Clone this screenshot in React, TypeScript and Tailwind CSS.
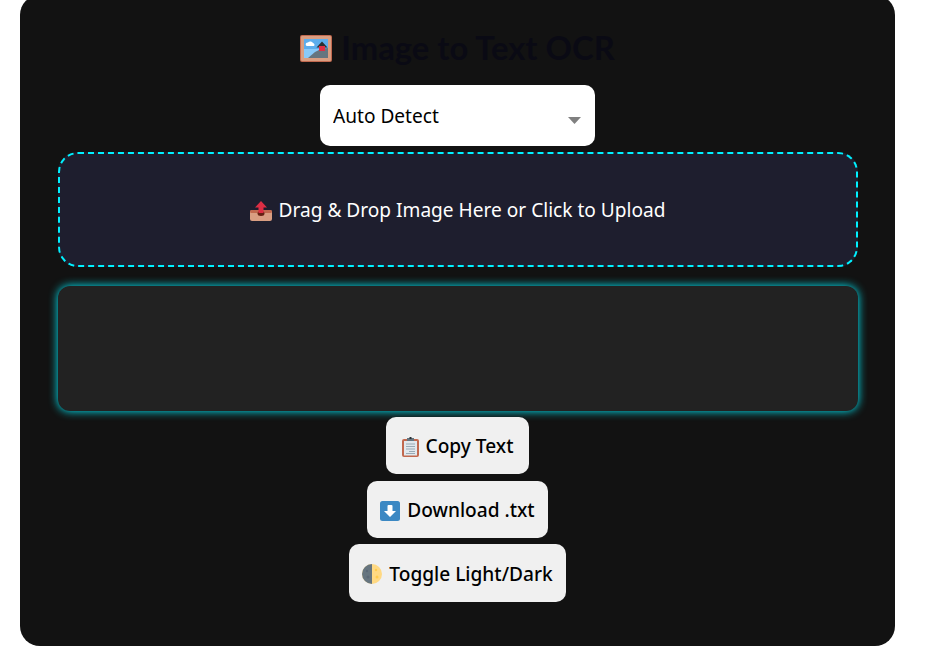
const body = { fontFamily: '"Noto Sans", "Open Sans", sans-serif' }
const title = { fontFamily: 'Lato, "Noto Sans", sans-serif' }

function PictureIcon() {
  return (
    <svg width="32" height="27" viewBox="0 0 32 27" className="shrink-0">
      <rect x="0" y="0" width="32" height="27" rx="2" fill="#c1694f" />
      <rect x="1" y="1" width="30" height="25" rx="1" fill="#d99e82" />
      <rect x="4" y="4" width="24" height="19" fill="#5dadec" />
      <rect x="4" y="14" width="24" height="9" fill="#88c9f9" />
      <path d="M6 10.500a2 2 0 0 1 2-3 3 3 0 0 1 5 .5 1.800 1.800 0 0 1 1 3H7a1.500 1.500 0 0 1-1-.5z" fill="#fff" />
      <path d="M8 23l7-6 6-3 7-1v10z" fill="#66757f" />
      <path d="M16.500 12.500l5.500-6 5.500 6z" fill="#292f33" />
      <rect x="19" y="11" width="6" height="5" fill="#dd2e44" />
    </svg>
  )
}

function UploadIcon() {
  return (
    <svg width="22" height="20" viewBox="0 0 22 20" className="shrink-0">
      <rect x="0" y="9" width="22" height="11" rx="2" fill="#d99e82" />
      <rect x="0" y="9" width="22" height="3" rx="1.500" fill="#c1694f" />
      <ellipse cx="11" cy="12.500" rx="3.500" ry="2.500" fill="#662113" />
      <path d="M11 0l6 6.500h-3.500V12h-5V6.500H5z" fill="#dd2e44" />
    </svg>
  )
}

function ClipboardIcon() {
  return (
    <svg width="17" height="20" viewBox="0 0 17 20" className="shrink-0">
      <rect x="0" y="2" width="17" height="18" rx="2" fill="#c1694f" />
      <rect x="2" y="4" width="13" height="14.500" fill="#e1e8ed" />
      <rect x="5" y="1" width="7" height="3" fill="#66757f" />
      <rect x="7.500" y="0" width="2" height="2" fill="#292f33" />
      <path d="M4 7h9M4 9.500h9M4 12h9M7 14.500h6M4 16.500h9" stroke="#99aab5" strokeWidth="1" />
    </svg>
  )
}

function DownloadIcon() {
  return (
    <svg width="20" height="20" viewBox="0 0 20 20" className="shrink-0">
      <rect width="20" height="20" rx="2.500" fill="#3b88c3" />
      <path d="M10 16L4 10h3.500V5a1 1 0 0 1 1-1h3a1 1 0 0 1 1 1v5H16z" fill="#fff" />
    </svg>
  )
}

function MoonIcon() {
  return (
    <svg width="20" height="20" viewBox="0 0 20 20" className="shrink-0">
      <circle cx="10" cy="10" r="10" fill="#ffd983" />
      <path d="M10 0a10 10 0 0 0 0 20z" fill="#66757f" />
      <circle cx="5" cy="7" r="1.200" fill="#5b6876" />
      <circle cx="6" cy="13" r="1.500" fill="#5b6876" />
      <circle cx="14" cy="6" r="1.200" fill="#ffcc4d" />
      <circle cx="15" cy="13" r="1.500" fill="#ffcc4d" />
    </svg>
  )
}

function ActionButton({ icon, label, className }: { icon: React.ReactNode; label: string; className: string }) {
  return (
    <button
      type="button"
      className={'flex items-center justify-center gap-[7px] rounded-[10px] bg-[#f0f0f0] pt-[2px] text-[19.100px] font-medium text-[#000] ' + className}
    >
      {icon}
      {label}
    </button>
  )
}

export default function App() {
  return (
    <div className="min-h-[661px] bg-white pl-[20px]" style={body}>
      <div className="mt-[-5px] flex h-[651px] w-[875px] flex-col items-center rounded-[20px] bg-[#121212] pt-[34px]">
        <h1 className="flex h-[38px] items-center gap-[9px] text-[32.800px] font-bold text-[#0a0a14]" style={title}>
          <PictureIcon />
          Image to Text OCR
        </h1>

        <div className="relative mt-[18px] h-[61px] w-[275px]">
          <select
            className="h-full w-full appearance-none rounded-[10px] bg-white px-[13px] pt-[2px] text-[19.100px] text-black"
            style={body}
          >
            <option>Auto Detect</option>
          </select>
          <svg width="13" height="7" viewBox="0 0 13 7" className="absolute right-[14px] top-[32px]">
            <path d="M0 0h13L6.500 7z" fill="#808080" />
          </svg>
        </div>

        <div className="mt-[6px] flex h-[115px] w-[800px] items-center justify-center gap-[7px] rounded-[20px] border-2 border-dashed border-[#00f0ff] bg-[#1e1e2e] pt-[2px] text-[19.100px] text-white">
          <UploadIcon />
          Drag &amp; Drop Image Here or Click to Upload
        </div>

        <textarea className="mt-[19px] h-[125px] w-[800px] resize-none rounded-[12px] bg-[#222222] shadow-[0_0_10px_#00f0ff]" />

        <ActionButton icon={<ClipboardIcon />} label="Copy Text" className="mt-[6px] h-[57px] w-[143px]" />
        <ActionButton icon={<DownloadIcon />} label="Download .txt" className="mt-[7px] h-[57px] w-[181px]" />
        <ActionButton icon={<MoonIcon />} label="Toggle Light/Dark" className="mt-[6px] h-[58px] w-[217px]" />
      </div>
    </div>
  )
}
